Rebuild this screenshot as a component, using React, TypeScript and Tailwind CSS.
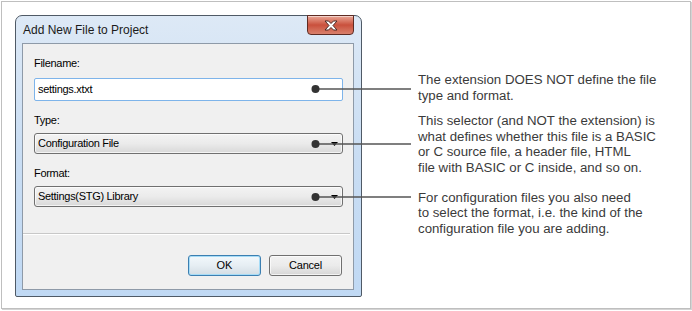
import React from "react";

const ui = { fontFamily: '"Liberation Sans", Arial, sans-serif' };

const notes = [
  ["The extension DOES NOT define the file", "type and format."],
  [
    "This selector (and NOT the extension) is",
    "what defines whether this file is a BASIC",
    "or C source file, a header file, HTML",
    "file with BASIC or C inside, and so on.",
  ],
  [
    "For configuration files you also need",
    "to select the format, i.e. the kind of the",
    "configuration file you are adding.",
  ],
];

// dot + leader line positions (page coordinates)
const leaders = [89, 144, 197];

function Select({ value }: { value: string }) {
  return (
    <div className="mt-[6px] flex h-[21px] items-center justify-between rounded-[3px] border border-[#707070] bg-gradient-to-b from-[#f3f3f3] via-[#ebebeb] to-[#d8d8d8] pl-[3px] pr-[4px] shadow-[inset_0_0_0_1px_rgba(255,255,255,0.7)]">
      <span className="text-[11px] leading-[13px] tracking-[-0.3px] text-black">{value}</span>
      <svg width="7" height="4" viewBox="0 0 7 4" aria-hidden>
        <polygon points="0,0 7,0 3.5,4" fill="#000" />
      </svg>
    </div>
  );
}

function Label({ text, mt }: { text: string; mt: string }) {
  return <div className={`${mt} text-[11px] leading-[13px] tracking-[-0.3px] text-black`}>{text}</div>;
}

export default function App() {
  return (
    <div className="relative h-[311px] w-[692px] overflow-hidden bg-white" style={ui}>
      <div className="ml-[1px] mt-[1px] flex h-[308px] w-[690px] border border-[#bfbfbf] pl-[13px] pt-[13px] shadow-[1px_1px_0_#d4d4d4]">
        {/* dialog */}
        <div className="flex h-[282px] w-[347px] shrink-0 flex-col rounded-t-[7px] rounded-b-[2px] border border-[#4f5a66] bg-gradient-to-b from-[#dde9f6] via-[#c9ddf3] to-[#c0d9f4] pb-[6px] pl-[6px] pr-[7px]">
          <div className="flex h-[27px] items-center justify-between">
            <span className="ml-[1px] text-[12px] leading-[14px] text-[#1a1a1a]">Add New File to Project</span>
            <div className="-mt-[1px] flex h-[20px] w-[47px] items-center justify-center self-start rounded-b-[4px] border border-[#5e2b23] bg-gradient-to-b from-[#e9a797] via-[#c9503c] to-[#d9806c] shadow-[inset_0_1px_0_rgba(255,255,255,0.5)]">
              <svg width="16" height="11" viewBox="0 0 16 11" aria-hidden>
                <path
                  d="M2 1 L5.5 1 L8 3.5 L10.5 1 L14 1 L10 5.5 L14 10 L10.5 10 L8 7.5 L5.5 10 L2 10 L6 5.5 Z"
                  fill="#fff"
                  stroke="#4a2a26"
                  strokeWidth="1"
                  strokeLinejoin="round"
                />
              </svg>
            </div>
          </div>

          <div className="flex h-[247px] flex-col border border-[#8e9aa8] bg-[#f0f0f0]">
            <div className="flex flex-col pl-[11px] pr-[10px]">
              <Label text="Filename:" mt="mt-[13px]" />
              <div className="mt-[8px] flex h-[23px] items-center rounded-[2px] border border-[#7eb4ea] bg-white pl-[3px]">
                <span className="text-[11px] leading-[13px] tracking-[-0.3px] text-black">settings.xtxt</span>
              </div>
              <Label text="Type:" mt="mt-[13px]" />
              <Select value="Configuration File" />
              <Label text="Format:" mt="mt-[13px]" />
              <Select value="Settings(STG) Library" />
            </div>
            <div className="mr-[3px] mt-[26px] flex justify-end gap-[8px] border-t border-[#c8c8c8] pr-[8px] pt-[21px] shadow-[inset_0_1px_0_#ffffff]">
              <button className="flex h-[21px] w-[73px] items-center justify-center rounded-[3px] border border-[#3c7fb1] bg-gradient-to-b from-[#f2f8fc] via-[#e6eef3] to-[#d3dde4] shadow-[inset_0_0_0_1px_#a6dcf7] text-[11px] leading-[13px] text-black">
                OK
              </button>
              <button className="flex h-[21px] w-[73px] items-center justify-center rounded-[3px] border border-[#707070] bg-gradient-to-b from-[#f2f2f2] via-[#ebebeb] to-[#d6d6d6] shadow-[inset_0_0_0_1px_rgba(255,255,255,0.7)] text-[11px] leading-[13px] tracking-[-0.2px] text-black">
                Cancel
              </button>
            </div>
          </div>
        </div>

        {/* annotations */}
        <div className="ml-[56px] mt-[57px] flex flex-col text-[13.25px] leading-[15.6px] text-[#3a3a3a]">
          {notes.map((lines, i) => (
            <p key={i} className={i === 1 ? "mt-[10px]" : i === 2 ? "mt-[14px]" : ""}>
              {lines.map((l) => (
                <span key={l} className="block whitespace-nowrap">
                  {l}
                </span>
              ))}
            </p>
          ))}
        </div>
      </div>

      {/* callout leaders over the dialog */}
      <svg className="pointer-events-none absolute left-0 top-0" width="692" height="311" aria-hidden>
        {leaders.map((y) => (
          <g key={y}>
            <line x1="315.5" y1={y} x2="411" y2={y} stroke="#555" strokeWidth="1.6" />
            <circle cx="315.5" cy={y} r="4" fill="#333" />
          </g>
        ))}
      </svg>
    </div>
  );
}
